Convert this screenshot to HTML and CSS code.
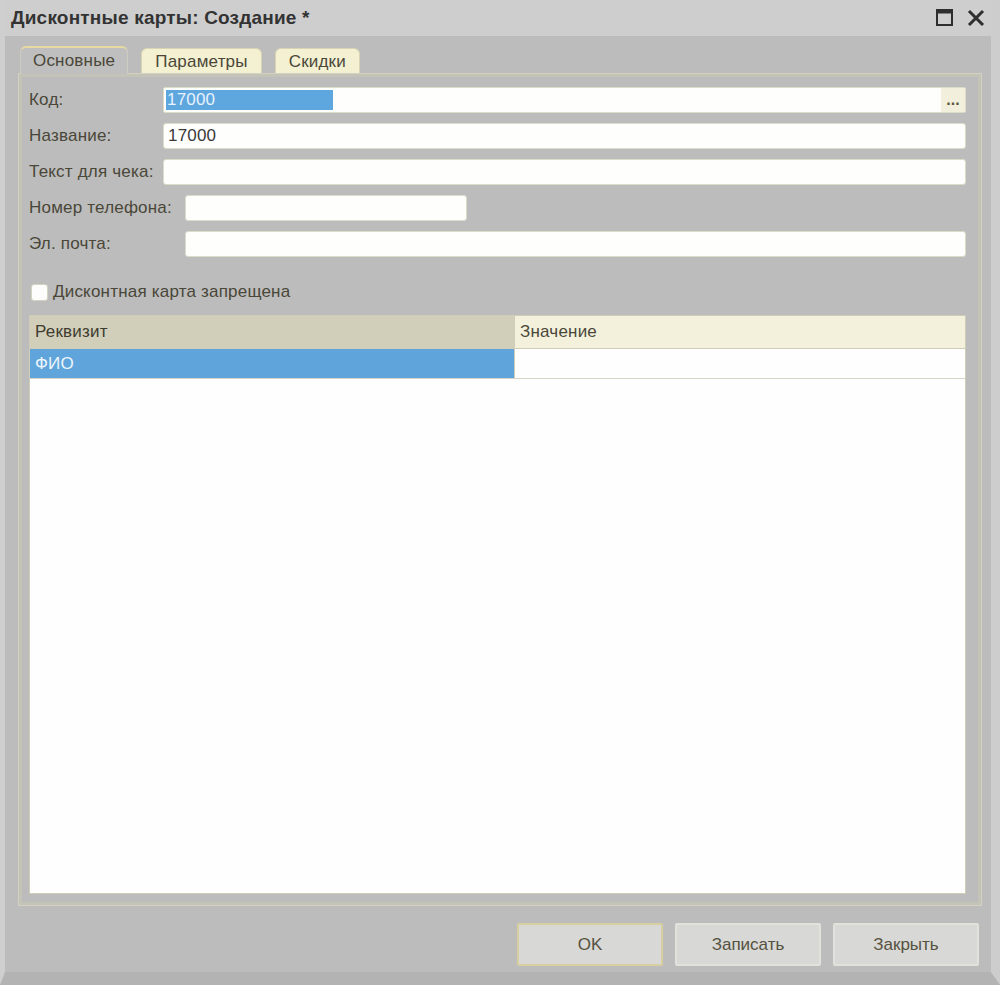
FILE: index.html
```html
<!DOCTYPE html>
<html lang="ru">
<head>
<meta charset="UTF-8">
<meta name="viewport" content="width=device-width, initial-scale=1.0">
<title>Дисконтные карты: Создание *</title>
<link rel="stylesheet" href="styles.css">
</head>
<body>

<div class="window">
    <div class="titlebar">
        <div class="title">Дисконтные карты: Создание *</div>
        <div class="title-buttons">
            <svg class="title-icon" width="20" height="20" viewBox="0 0 20 20">
                <rect x="2" y="2" width="15" height="15" fill="none" stroke="#2e2e2e" stroke-width="2"/>
                <line x1="2" y1="4" x2="17" y2="4" stroke="#2e2e2e" stroke-width="3"/>
            </svg>
            <svg class="title-icon" width="20" height="20" viewBox="0 0 20 20">
                <path d="M3 3 L17 17 M17 3 L3 17" stroke="#2e2e2e" stroke-width="3" fill="none"/>
            </svg>
        </div>
    </div>

    <div class="tabs">
        <div class="tab tab-active">Основные</div>
        <div class="tab">Параметры</div>
        <div class="tab">Скидки</div>
    </div>

    <div class="panel">
        <div class="field">
            <label class="field-label">Код:</label>
            <div class="input input-code">
                <span class="selected">17000</span>
                <span class="dots">...</span>
            </div>
        </div>
        <div class="field">
            <label class="field-label">Название:</label>
            <div class="input">17000</div>
        </div>
        <div class="field">
            <label class="field-label">Текст для чека:</label>
            <div class="input"></div>
        </div>
        <div class="field field-wide">
            <label class="field-label">Номер телефона:</label>
            <div class="input input-phone"></div>
        </div>
        <div class="field field-wide">
            <label class="field-label">Эл. почта:</label>
            <div class="input"></div>
        </div>

        <div class="check-row">
            <span class="checkbox"></span>
            <span>Дисконтная карта запрещена</span>
        </div>

        <div class="table">
            <div class="table-head">
                <div class="col col-name">Реквизит</div>
                <div class="col col-value">Значение</div>
            </div>
            <div class="table-row">
                <div class="col col-name cell-selected">ФИО</div>
                <div class="col col-value"></div>
            </div>
        </div>
    </div>

    <div class="buttons">
        <button class="btn btn-default">OK</button>
        <button class="btn">Записать</button>
        <button class="btn">Закрыть</button>
    </div>
</div>

</body>
</html>
```

FILE: styles.css
```css
body {
    margin: 0;
    padding: 0;
    font-family: "Liberation Sans", Arial, sans-serif;
    font-size: 17px;
    letter-spacing: 0.2px;
    color: #4a4739;
    background: #bcbcbc;
}
.window {
    width: 1000px;
    height: 985px;
    box-sizing: border-box;
    background: #bcbcbc;
    border-left: 5px solid #cfcfcf;
    border-right: 9px solid #cdcdcd;
    border-bottom: 13px solid #b3b3b3;
    display: flex;
    flex-direction: column;
    overflow: hidden;
}
.titlebar {
    height: 36px;
    margin-left: -5px;
    margin-right: -9px;
    background: #cecece;
    display: flex;
    align-items: center;
    justify-content: space-between;
    padding: 0 12px 0 11px;
}
.title {
    font-weight: bold;
    font-size: 19px;
    color: #333;
    letter-spacing: 0.2px;
}
.title-buttons {
    display: flex;
    gap: 11px;
    margin-right: 2px;
}
.tabs {
    display: flex;
    align-items: flex-end;
    gap: 13px;
    padding-left: 15px;
    margin-top: 10px;
    height: 27px;
}
.tab {
    height: 24px;
    padding: 0 13px;
    line-height: 25px;
    background: #f4f0d2;
    border: 1px solid #d8d4b4;
    border-bottom: none;
    border-radius: 6px 6px 0 0;
    color: #4a4739;
}
.tab-active {
    height: 26px;
    background: #bfbfbf;
    border-color: #cfcdc0;
    border-top: 2px solid #e6d9a2;
    position: relative;
    top: 1px;
    padding: 0 12px;
}
.panel {
    margin: 0 9px 0 13px;
    height: 833px;
    box-sizing: border-box;
    border: 1px solid #d3d1bf;
    box-shadow: inset 0 0 0 3px #c4c3b8;
    padding: 13px 15px 11px 10px;
    display: flex;
    flex-direction: column;
}
.field {
    display: flex;
    align-items: center;
    height: 26px;
    margin-bottom: 10px;
}
.field-label {
    width: 134px;
    flex-shrink: 0;
    white-space: nowrap;
}
.field-wide .field-label {
    width: 156px;
}
.input {
    flex: 1;
    height: 26px;
    box-sizing: border-box;
    background: #fefefc;
    border: 1px solid #dcdac8;
    border-radius: 3px;
    padding: 0 4px;
    line-height: 24px;
    color: #3a3a3a;
}
.input-phone {
    flex: 0 0 282px;
}
.input-code {
    display: flex;
    align-items: center;
    padding: 0 0 0 2px;
    border-radius: 2px;
}
.selected {
    background: #5ea6de;
    color: #e8f2fb;
    width: 166px;
    height: 20px;
    line-height: 20px;
    padding-left: 1px;
}
.dots {
    margin-left: auto;
    width: 24px;
    height: 24px;
    background: #f2f0dc;
    color: #5a5640;
    font-weight: bold;
    font-size: 16px;
    text-align: center;
    line-height: 24px;
    letter-spacing: 0;
}
.check-row {
    display: flex;
    align-items: center;
    gap: 5px;
    margin-top: 15px;
    padding-left: 2px;
}
.checkbox {
    width: 15px;
    height: 15px;
    background: #fdfdfd;
    border: 1px solid #d4d2c0;
    border-radius: 3px;
}
.table {
    margin-top: 13px;
    flex: 1;
    background: #fefefe;
    border: 1px solid #cfcdb8;
}
.table-head {
    display: flex;
    height: 32px;
    border-bottom: 1px solid #cfcdb8;
}
.table-row {
    display: flex;
    height: 29px;
    border-bottom: 1px solid #d6d4c4;
}
.col {
    display: flex;
    align-items: center;
    padding-left: 5px;
    box-sizing: border-box;
}
.col-name {
    width: 485px;
    border-right: 1px solid #cfcdb8;
}
.col-value {
    flex: 1;
}
.table-head .col-name {
    background: #d1cfb9;
    color: #3e3c30;
}
.table-head .col-value {
    background: #f3f1dc;
}
.cell-selected {
    background: #5fa5dc;
    color: #eef5fb;
}
.buttons {
    display: flex;
    justify-content: flex-end;
    gap: 12px;
    margin-top: 17px;
    margin-right: 12px;
}
.btn {
    width: 146px;
    height: 43px;
    background: #d8d8d6;
    border: 2px solid #e2e1dc;
    border-radius: 2px;
    font-family: "Liberation Sans", Arial, sans-serif;
    font-size: 17px;
    color: #55523f;
    cursor: pointer;
}
.btn-default {
    border-color: #d7cfa0;
}
```
